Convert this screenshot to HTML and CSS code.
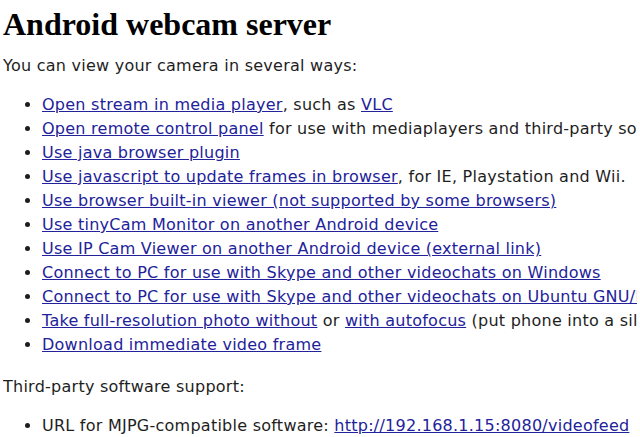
FILE: index.html
```html
<!DOCTYPE html>
<html>
<head>
<meta charset="utf-8">
<title>Android webcam server</title>
<link rel="stylesheet" href="styles.css">
</head>
<body class="page">
<h1 class="title">Android webcam server</h1>
<p class="intro">You can view your camera in several ways:</p>
<ul class="ways">
<li><a href="#">Open stream in media player</a>, such as <a href="#">VLC</a></li>
<li><a href="#">Open remote control panel</a> for use with mediaplayers and third-party software</li>
<li><a href="#">Use java browser plugin</a></li>
<li><a href="#">Use javascript to update frames in browser</a>, for IE, Playstation and Wii.</li>
<li><a href="#">Use browser built-in viewer (not supported by some browsers)</a></li>
<li><a href="#">Use tinyCam Monitor on another Android device</a></li>
<li><a href="#">Use IP Cam Viewer on another Android device (external link)</a></li>
<li><a href="#">Connect to PC for use with Skype and other videochats on Windows</a></li>
<li><a href="#">Connect to PC for use with Skype and other videochats on Ubuntu GNU/Linux</a></li>
<li><a href="#">Take full-resolution photo without</a> or <a href="#">with autofocus</a> (put phone into a silent mode)</li>
<li><a href="#">Download immediate video frame</a></li>
</ul>
<p class="support">Third-party software support:</p>
<ul class="support-list">
<li>URL for MJPG-compatible software: <a href="#">http://192.168.1.15:8080/videofeed</a></li>
</ul>
</body>
</html>
```
FILE: styles.css
```css
html {
  overflow: hidden;
  background: #ffffff;
}
.page {
  margin: 6px 3px;
  color: #1e1e1e;
  font-family: "DejaVu Sans", Verdana, sans-serif;
  font-size: 16px;
  line-height: 24px;
  letter-spacing: 0.25px;
}
.page a {
  color: #22229a;
  text-decoration: underline;
}
.title {
  margin: 0 0 12px;
  font-family: "Liberation Serif", "Times New Roman", serif;
  font-weight: bold;
  font-size: 32px;
  line-height: 36px;
  letter-spacing: 0;
  color: #000;
}
.intro {
  margin: 0 0 15px;
}
.ways {
  margin: 0 0 18px;
  padding-left: 39px;
  white-space: nowrap;
}
.support {
  margin: 0 0 15px;
}
.support-list {
  margin: 0;
  padding-left: 39px;
  white-space: nowrap;
}
```
